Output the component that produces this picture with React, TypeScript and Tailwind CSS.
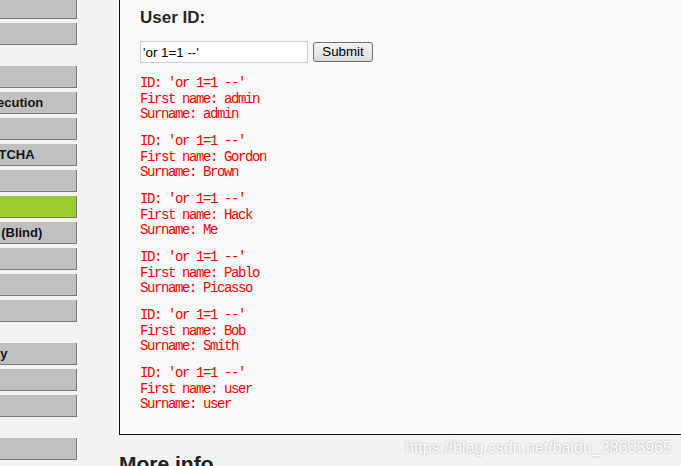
import React from 'react';

const menuGroups = [
  ['Instructions', 'Setup'],
  [
    'Brute Force',
    'Command Execution',
    'CSRF',
    'Insecure CAPTCHA',
    'File Inclusion',
    'SQL Injection',
    'SQL Injection (Blind)',
    'Upload',
    'XSS reflected',
    'XSS stored',
  ],
  ['DVWA Security', 'PHP Info', 'About'],
  ['Logout'],
];

const users = [
  { first: 'admin', last: 'admin' },
  { first: 'Gordon', last: 'Brown' },
  { first: 'Hack', last: 'Me' },
  { first: 'Pablo', last: 'Picasso' },
  { first: 'Bob', last: 'Smith' },
  { first: 'user', last: 'user' },
];

function MenuItem({ label }: { label: string }) {
  const selected = label === 'SQL Injection';
  return (
    <div
      className={
        selected
          ? 'h-[22px] mb-[4px] pl-[14px] bg-[#9acd32] border-r border-b border-[#7a7a7a] text-[13px] font-bold leading-[21px] text-[#161616] whitespace-nowrap'
          : 'h-[22px] mb-[4px] pl-[14px] bg-[#c0c0c0] border-r border-b border-[#7a7a7a] text-[13px] font-bold leading-[21px] text-[#161616] whitespace-nowrap'
      }
    >
      {label}
    </div>
  );
}

export default function App() {
  const query = "'or 1=1 --'";

  return (
    <div className="relative w-[681px] h-[466px] overflow-hidden bg-[#f3f3f3] flex font-['Liberation_Sans',Arial,sans-serif]">
      {/* left menu, scrolled so only the right part shows */}
      <div className="w-[77px] shrink-0 overflow-hidden">
        <div className="ml-[-100px] w-[177px] mt-[-3px]">
          {menuGroups.map((group, i) => (
            <div key={i} className={i < menuGroups.length - 1 ? 'mb-[21px]' : ''}>
              {group.map((label) => (
                <MenuItem key={label} label={label} />
              ))}
            </div>
          ))}
        </div>
      </div>

      <div className="ml-[42px] flex-1 flex flex-col">
        <div className="h-[435px] shrink-0 bg-[#f8f9f9] border-l border-b border-[#111] pl-[20px]">
          <h3 className="mt-[8px] text-[17px] leading-[19px] font-bold text-[#282828]">User ID:</h3>

          <form className="mt-[14px] flex items-center" onSubmit={(e) => e.preventDefault()}>
            <input
              type="text"
              defaultValue={query}
              className="w-[168px] h-[22px] px-[2px] bg-white border border-[#cdcdcd] text-[13.33px] text-black outline-none font-['Liberation_Sans',Arial,sans-serif]"
            />
            <button
              type="submit"
              className="ml-[5px] w-[60px] h-[20px] rounded-[3px] border border-[#707070] bg-gradient-to-b from-[#f4f4f4] to-[#dcdcdc] text-[13.33px] leading-[18px] text-black"
            >
              Submit
            </button>
          </form>

          <div className="mt-[13px] text-[#f00] text-[14px] tracking-[-1.4px] leading-[15.5px]">
            {users.map((u, i) => (
              <pre key={i} className="mb-[11.5px] font-['Liberation_Mono','Courier_New',monospace]">
                {`ID: 'or 1=1 --'\nFirst name: ${u.first}\nSurname: ${u.last}`}
              </pre>
            ))}
          </div>
        </div>

        <h2 className="mt-[17px] text-[21px] leading-[24px] font-bold text-[#202020]">More info</h2>
      </div>

      <div className="absolute left-[405px] top-[436px] text-[16px] text-white whitespace-nowrap [text-shadow:0_0_2px_rgba(0,0,0,0.35)]">
        https://blog.csdn.net/baidu_38603965
      </div>
    </div>
  );
}
